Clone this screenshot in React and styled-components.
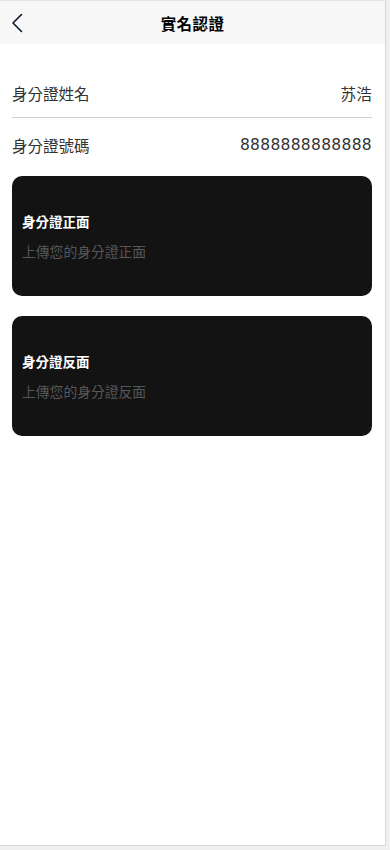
import React from 'react';
import styled, { createGlobalStyle } from 'styled-components';

const GlobalStyle = createGlobalStyle`
  html, body {
    margin: 0;
    padding: 0;
    background: #efefef;
  }
  body {
    font-family: "Noto Sans CJK TC", "Noto Sans CJK SC", "Noto Sans", sans-serif;
  }
`;

const Frame = styled.div`
  width: 385px;
  height: 844px;
  background: #ffffff;
  border-top: 1px solid #e4e4e4;
  border-right: 1px solid #d8d8d8;
  border-bottom: 1px solid #d8d8d8;
  display: flex;
  flex-direction: column;
`;

const Header = styled.header`
  height: 43px;
  background: #f7f7f7;
  display: flex;
  align-items: center;
  justify-content: center;
  position: relative;
`;

const BackButton = styled.button`
  position: absolute;
  left: 8px;
  top: 10px;
  width: 18px;
  height: 24px;
  padding: 0;
  border: none;
  background: transparent;
  display: flex;
  align-items: center;
  justify-content: center;
  cursor: pointer;
`;

const Title = styled.h1`
  margin: 0;
  font-size: 15.5px;
  font-weight: 700;
  color: #000000;
  letter-spacing: 0.4px;
`;

const Content = styled.main`
  padding: 24px 13px 0 12px;
  display: flex;
  flex-direction: column;
`;

const Row = styled.div`
  height: ${p => p.$height}px;
  display: flex;
  align-items: center;
  justify-content: space-between;
  border-bottom: ${p => (p.$divider ? '1px solid #cfcfcf' : 'none')};
`;

const Label = styled.span`
  font-size: 15.5px;
  color: #333333;
`;

const Value = styled.span`
  font-family: "DejaVu Sans", "Noto Sans CJK TC", sans-serif;
  font-size: 15.5px;
  letter-spacing: 0.3px;
  color: #333333;
`;

const Cards = styled.div`
  margin-top: 4px;
  display: flex;
  flex-direction: column;
  gap: 20px;
`;

const UploadCard = styled.div`
  height: 120px;
  border-radius: 10px;
  background: #131313;
  padding: 0 10px;
  display: flex;
  flex-direction: column;
  justify-content: center;
  gap: 10px;
  cursor: pointer;
`;

const CardTitle = styled.div`
  font-size: 13.5px;
  line-height: 20px;
  font-weight: 700;
  color: #ffffff;
`;

const CardHint = styled.div`
  font-size: 13.8px;
  line-height: 20px;
  color: #575757;
`;

const ChevronLeft = () => (
  <svg width="12" height="20" viewBox="0 0 12 20" fill="none">
    <polyline
      points="10.5,1.5 2,10 10.5,18.5"
      stroke="#0d1a2b"
      strokeWidth="1.6"
      strokeLinecap="round"
      strokeLinejoin="round"
    />
  </svg>
);

const cards = [
  { title: '身分證正面', hint: '上傳您的身分證正面' },
  { title: '身分證反面', hint: '上傳您的身分證反面' },
];

export default function App() {
  return (
    <>
      <GlobalStyle />
      <Frame>
        <Header>
          <BackButton aria-label="back">
            <ChevronLeft />
          </BackButton>
          <Title>實名認證</Title>
        </Header>
        <Content>
          <Row $height={49} $divider>
            <Label>身分證姓名</Label>
            <Value>苏浩</Value>
          </Row>
          <Row $height={54}>
            <Label>身分證號碼</Label>
            <Value>8888888888888</Value>
          </Row>
          <Cards>
            {cards.map(card => (
              <UploadCard key={card.title}>
                <CardTitle>{card.title}</CardTitle>
                <CardHint>{card.hint}</CardHint>
              </UploadCard>
            ))}
          </Cards>
        </Content>
      </Frame>
    </>
  );
}
